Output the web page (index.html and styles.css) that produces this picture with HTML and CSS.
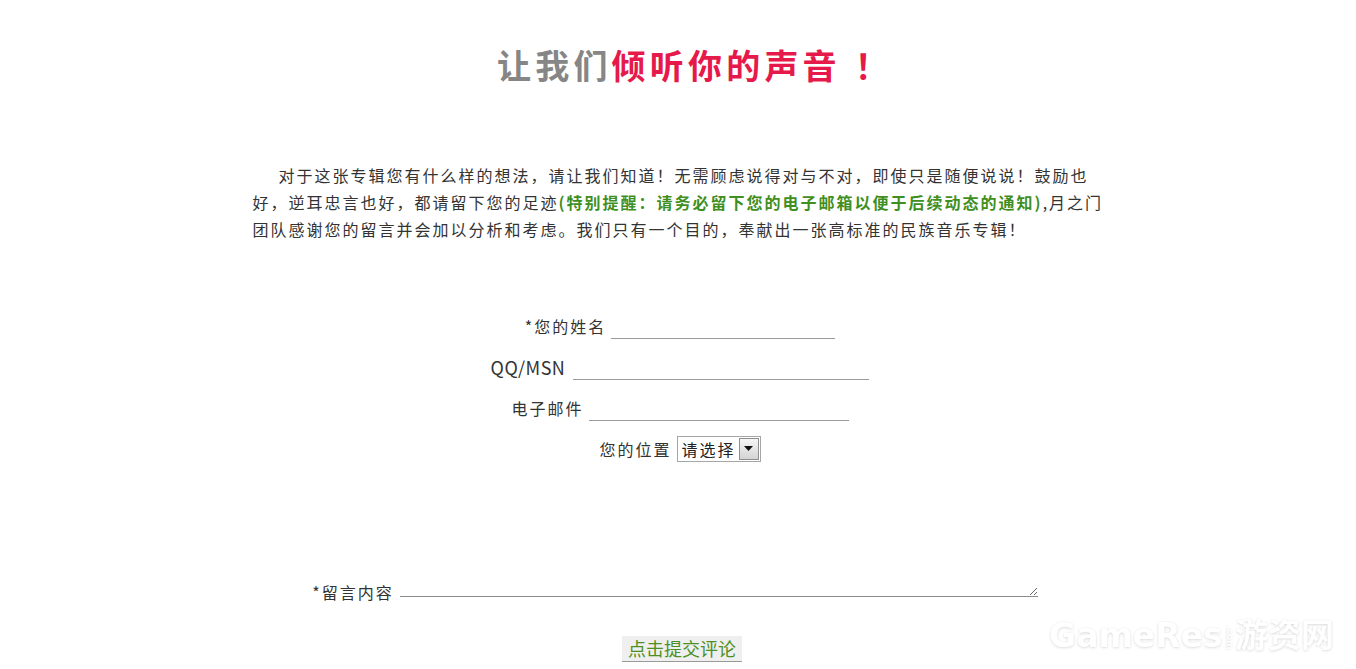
FILE: index.html
```html
<!DOCTYPE html>
<html lang="zh-CN">
<head>
<meta charset="utf-8">
<title>让我们倾听你的声音！</title>
<link rel="stylesheet" href="styles.css">
</head>
<body>
<div class="page">
  <h1 class="title"><span class="title-gray">让我们</span><span class="title-red">倾听你的声音<span class="title-bang">！</span></span></h1>
  <p class="intro">对于这张专辑您有什么样的想法，请让我们知道！无需顾虑说得对与不对，即使只是随便说说！鼓励也好，逆耳忠言也好，都请留下您的足迹<strong class="notice">(特别提醒：请务必留下您的电子邮箱以便于后续动态的通知)</strong>,月之门团队感谢您的留言并会加以分析和考虑。我们只有一个目的，奉献出一张高标准的民族音乐专辑！</p>
  <form class="form">
    <div class="row"><label class="label" for="f-name">*您的姓名</label><input class="field field-name" id="f-name" type="text"></div>
    <div class="row"><label class="label label-latin" for="f-qq">QQ/MSN</label><input class="field field-qq" id="f-qq" type="text"></div>
    <div class="row"><label class="label" for="f-mail">电子邮件</label><input class="field field-mail" id="f-mail" type="text"></div>
    <div class="row"><label class="label" for="f-loc">您的位置</label>
      <div class="select"><select class="select-box" id="f-loc"><option>请选择</option></select><span class="select-arrow"><svg width="9" height="5" viewBox="0 0 9 5"><path d="M0 0h9L4.5 5z" fill="#111"/></svg></span></div>
    </div>
    <div class="row row-msg"><label class="label" for="f-msg">*留言内容</label><textarea class="message" id="f-msg"></textarea></div>
    <div class="actions"><button class="submit" type="button">点击提交评论</button></div>
  </form>
</div>
<div class="watermark">GameRes<span class="wm-com">.com</span>游资网</div>
</body>
</html>
```
FILE: styles.css
```css
html, body {
  margin: 0;
  padding: 0;
  background: #ffffff;
}
body {
  font-family: "Noto Sans CJK SC", "Noto Sans", sans-serif;
  color: #333333;
}
.page {
  display: flex;
  flex-direction: column;
  align-items: center;
}
.title {
  margin: 0;
  padding: 45px 0 0 34px;
  font-size: 34px;
  line-height: 40px;
  font-weight: bold;
  letter-spacing: 4.2px;
  white-space: nowrap;
}
.title-gray {
  color: #868686;
}
.title-red {
  color: #e6194b;
}
.title-bang {
  padding-left: 14px;
}
.intro {
  width: 851px;
  margin: 77px 0 0;
  font-size: 16px;
  line-height: 27px;
  letter-spacing: 2px;
  text-indent: 26px;
  color: #333333;
}
.notice {
  color: #3f8f1f;
  font-weight: bold;
}
.form {
  margin-top: 62px;
  display: flex;
  flex-direction: column;
  align-items: center;
  padding-left: 4px;
}
.row {
  height: 41px;
  display: flex;
  align-items: center;
  justify-content: center;
  gap: 5px;
}
.label {
  font-size: 16px;
  line-height: 24px;
  letter-spacing: 2px;
  color: #333333;
}
.label-latin {
  font-size: 18px;
  letter-spacing: 0.5px;
  padding-right: 3px;
}
.field {
  box-sizing: border-box;
  height: 26px;
  margin-top: 1px;
  border: none;
  border-bottom: 1px solid #9a9a9a;
  outline: none;
  background: transparent;
  font-family: inherit;
  font-size: 16px;
  padding: 0 4px;
}
.field-name { width: 224px; }
.field-qq { width: 296px; }
.field-mail { width: 260px; }
.select {
  display: flex;
  box-sizing: border-box;
  height: 26px;
  border: 1px solid #a6a6a6;
  background: #ffffff;
}
.select-box {
  appearance: none;
  -webkit-appearance: none;
  border: none;
  outline: none;
  background: transparent;
  font-family: inherit;
  font-size: 16px;
  letter-spacing: 2px;
  color: #222222;
  padding: 0 2px 0 4px;
  height: 24px;
  line-height: 24px;
}
.select-arrow {
  box-sizing: border-box;
  width: 20px;
  height: 22px;
  margin: 1px 1px 1px 0;
  display: flex;
  align-items: center;
  justify-content: center;
  border: 1px solid #8f8f8f;
  background: linear-gradient(#f6f6f6, #d4d4d4);
}
.row-msg {
  height: auto;
  margin-top: 111px;
  align-items: flex-end;
  gap: 6px;
  padding-right: 10px;
}
.message {
  box-sizing: border-box;
  width: 638px;
  height: 17px;
  margin-bottom: 7px;
  border: none;
  border-bottom: 1px solid #8a8a8a;
  outline: none;
  background: transparent;
  padding: 0;
  resize: both;
  font-family: inherit;
}
.actions {
  margin-top: 32px;
  display: flex;
  justify-content: center;
  padding-left: 4px;
}
.submit {
  box-sizing: border-box;
  height: 26px;
  width: 120px;
  padding: 0;
  border: none;
  border-bottom: 1px solid #9a9a9a;
  background: #efefef;
  color: #4d8f25;
  font-family: inherit;
  font-size: 18px;
  line-height: 25px;
}
.watermark {
  position: fixed;
  right: 22px;
  bottom: 15px;
  font-family: "DejaVu Sans", "Noto Sans CJK SC", sans-serif;
  font-weight: bold;
  font-size: 33px;
  line-height: 36px;
  color: #ffffff;
  text-shadow: 0 1px 3px rgba(0, 0, 0, 0.12), 0 0 2px rgba(0, 0, 0, 0.08);
  white-space: nowrap;
}
.wm-com {
  display: inline-block;
  font-size: 9px;
  line-height: 9px;
  transform: rotate(90deg);
  margin: 0 -6px;
  vertical-align: middle;
}
```
